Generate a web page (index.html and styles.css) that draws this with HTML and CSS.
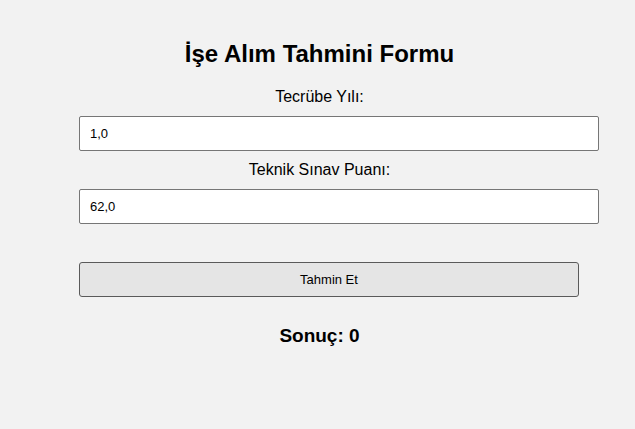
FILE: index.html
```html
<!DOCTYPE html>
<html lang="tr">
<head>
<meta charset="utf-8">
<title>İşe Alım Tahmini Formu</title>
<link rel="stylesheet" href="styles.css">
</head>
<body>
<div class="page">
  <h2 class="title">İşe Alım Tahmini Formu</h2>
  <form class="form">
    <label class="label" for="tecrube">Tecrübe Yılı:</label>
    <input class="input" id="tecrube" type="text" value="1,0">
    <label class="label" for="puan">Teknik Sınav Puanı:</label>
    <input class="input" id="puan" type="text" value="62,0">
    <button class="button" type="button">Tahmin Et</button>
  </form>
  <h3 class="result">Sonuç: 0</h3>
</div>
</body>
</html>
```

FILE: styles.css
```css
html, body {
  margin: 0;
  padding: 0;
  background: #f2f2f2;
}
body {
  font-family: "Liberation Sans", Arial, sans-serif;
  color: #000;
}
.page {
  padding: 8px 6px 8px 10px;
  text-align: center;
}
.title {
  font-size: 24px;
  font-weight: bold;
  margin: 32px 0 20px;
  line-height: 28px;
}
.form {
  display: flex;
  flex-direction: column;
  align-items: flex-start;
}
.label {
  display: block;
  align-self: stretch;
  font-size: 16px;
  line-height: 18px;
  margin: 0 0 10px;
}
.input {
  box-sizing: border-box;
  width: 520px;
  height: 35px;
  margin: 0 0 10px 69px;
  padding: 0 10px;
  border: 1px solid #767676;
  border-radius: 2px;
  background: #fff;
  font-family: "Liberation Sans", Arial, sans-serif;
  font-size: 13px;
  color: #000;
}
.button {
  box-sizing: border-box;
  width: 500px;
  height: 35px;
  margin: 28px 0 0 69px;
  border: 1px solid #5a5a5a;
  border-radius: 3px;
  background: #e5e5e5;
  font-family: "Liberation Sans", Arial, sans-serif;
  font-size: 13px;
  color: #000;
}
.result {
  font-size: 19px;
  font-weight: bold;
  margin: 28px 0 0;
  line-height: 22px;
}
```
